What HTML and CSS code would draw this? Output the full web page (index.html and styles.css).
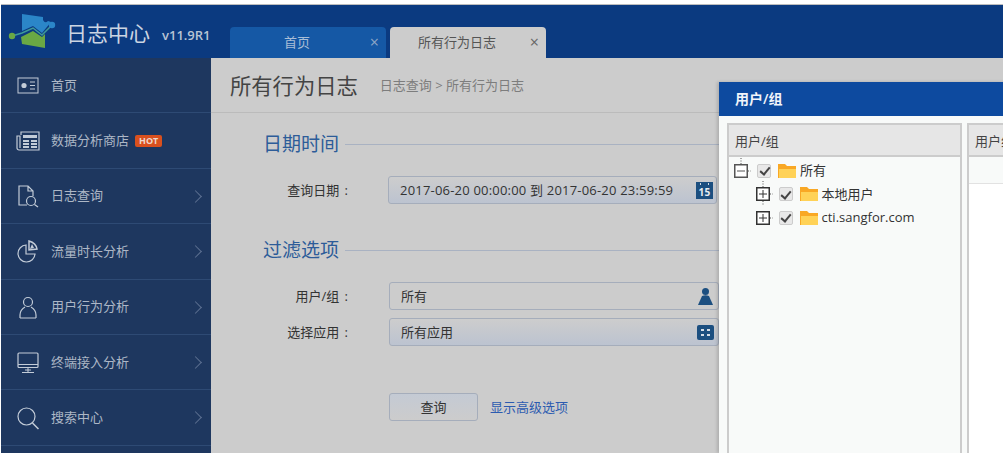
FILE: index.html
```html
<!DOCTYPE html>
<html lang="zh-CN">
<head>
    <meta charset="UTF-8">
    <meta name="viewport" content="width=device-width, initial-scale=1.0">
    <title>日志中心</title>
    <link rel="stylesheet" href="styles.css">
</head>
<body>
<div class="app">
    <header class="topbar">
        <div class="brand">
            <svg class="logo" width="48" height="38" viewBox="0 0 48 38">
                <path d="M14 1 L35 4 L35 7 Q37 11 40 8 L43 9 L34 20 L25 13 L14 18 Z" fill="#2b86c8"/>
                <path d="M13 24 L25 18 L34 24 L37 21 L37 35 L14 31 Z" fill="#6aa844"/>
                <path d="M4 23 L14 20 L25 15 L34 22 L44 12" fill="none" stroke="#3f9a98" stroke-width="1.500"/>
                <circle cx="4" cy="23" r="3.200" fill="#6aa844"/>
                <circle cx="44" cy="12" r="3.200" fill="#2b86c8"/>
            </svg>
            <span class="brand-name">日志中心</span>
            <span class="brand-ver">v11.9R1</span>
        </div>
        <div class="tabs">
            <div class="tab"><span>首页</span><span class="tab-close">×</span></div>
            <div class="tab tab-active"><span>所有行为日志</span><span class="tab-close">×</span></div>
        </div>
    </header>

    <div class="layout">
        <nav class="sidebar">
            <a class="nav-item">
                <svg class="nav-icon" viewBox="0 0 24 24"><rect x="2" y="5" width="20" height="15" fill="none" stroke="#c3ccd8"/><circle cx="8" cy="12.5" r="2.6" fill="#c3ccd8"/><path d="M14 9h5M14 12.500h5M14 16h5" stroke="#c3ccd8"/></svg>
                <span>首页</span>
            </a>
            <a class="nav-item">
                <svg class="nav-icon" viewBox="0 0 24 24"><path d="M5 6V3h18v18H3a2 2 0 0 1-2-2V7h3v12" fill="none" stroke="#c3ccd8" stroke-width="1.200"/><path d="M7 6h14v3H7zM7 11h6v2H7zM7 14h6v2H7zM7 17h6v2H7zM15 11h6v2h-6zM15 14h6v2h-6zM15 17h6v2h-6z" fill="#c3ccd8"/></svg>
                <span>数据分析商店</span><em class="hot">HOT</em>
            </a>
            <a class="nav-item">
                <svg class="nav-icon" viewBox="0 0 24 24"><path d="M11 21H3V2h9l5 5v5M12 2v5h5" fill="none" stroke="#c3ccd8" stroke-width="1.200"/><circle cx="15" cy="17" r="4.500" fill="none" stroke="#c3ccd8" stroke-width="1.200"/><path d="M18.500 20.500 22 23" stroke="#c3ccd8" stroke-width="1.200"/></svg>
                <span>日志查询</span><i class="chev"></i>
            </a>
            <a class="nav-item">
                <svg class="nav-icon" viewBox="0 0 24 24"><path d="M10 6a8.500 8.500 0 1 0 9 9h-9z" fill="none" stroke="#c3ccd8" stroke-width="1.200"/><path d="M13 2v9l8-1q-1-6-8-8z" fill="none" stroke="#c3ccd8" stroke-width="1.500"/><path d="M16 5l2 4-4 1z" fill="#c3ccd8"/></svg>
                <span>流量时长分析</span><i class="chev"></i>
            </a>
            <a class="nav-item">
                <svg class="nav-icon" viewBox="0 0 24 24"><circle cx="12" cy="7" r="4.500" fill="none" stroke="#c3ccd8" stroke-width="1.200"/><path d="M4 23v-3q0-5 5-8M20 23v-3q0-5-5-8M4 23h16" fill="none" stroke="#c3ccd8" stroke-width="1.200"/></svg>
                <span>用户行为分析</span><i class="chev"></i>
            </a>
            <a class="nav-item">
                <svg class="nav-icon" viewBox="0 0 24 24"><rect x="2" y="3" width="20" height="14.500" rx="1" fill="none" stroke="#c3ccd8" stroke-width="1.200"/><path d="M2 14.500h20M12 18v4M6 22.500h12M9 20h6" stroke="#c3ccd8" fill="none"/></svg>
                <span>终端接入分析</span><i class="chev"></i>
            </a>
            <a class="nav-item">
                <svg class="nav-icon" viewBox="0 0 24 24"><circle cx="10.500" cy="10.500" r="8.500" fill="none" stroke="#c3ccd8" stroke-width="1.200"/><path d="M16.500 17l6 6" stroke="#c3ccd8" stroke-width="1.500"/></svg>
                <span>搜索中心</span><i class="chev"></i>
            </a>
        </nav>

        <main class="main">
            <div class="page-head">
                <h1>所有行为日志</h1>
                <span class="crumbs">日志查询 &gt; 所有行为日志</span>
            </div>

            <section class="section section-date">
                <h2><span>日期时间</span></h2>
                <div class="field">
                    <label>查询日期 :</label>
                    <div class="input input-date">
                        <span>2017-06-20 00:00:00 到 2017-06-20 23:59:59</span>
                        <svg width="17" height="17" viewBox="0 0 17 17"><rect width="17" height="17" fill="#1c4f80"/><path d="M4.500 1v2M12.500 1v2" stroke="#cfd8e2"/><text x="8.500" y="14" class="cal-num">15</text></svg>
                    </div>
                </div>
            </section>

            <section class="section section-filter">
                <h2><span>过滤选项</span></h2>
                <div class="field">
                    <label>用户/组 :</label>
                    <div class="input input-plain">
                        <span>所有</span>
                        <svg width="15" height="17" viewBox="0 0 15 17"><circle cx="7.500" cy="3.500" r="3.500" fill="#1c4f80"/><path d="M4 8q3.500-1.500 7 0l4 9H0z" fill="#1c4f80"/></svg>
                    </div>
                </div>
                <div class="field">
                    <label>选择应用 :</label>
                    <div class="input">
                        <span>所有应用</span>
                        <svg width="17" height="15" viewBox="0 0 17 15"><rect width="17" height="15" rx="2" fill="#1c4f80"/><path d="M4 4h3v2H4zM10 4h3v2h-3zM4 9h3v2H4zM10 9h3v2h-3z" fill="#d5dde6"/></svg>
                    </div>
                </div>
                <div class="actions">
                    <button class="btn">查询</button>
                    <a class="link">显示高级选项</a>
                </div>
            </section>
        </main>
    </div>

    <div class="dialog">
        <div class="dialog-title">用户/组</div>
        <div class="dialog-body">
            <div class="panel panel-tree">
                <div class="panel-head">用户/组</div>
                <ul class="tree">
                    <li class="tree-row">
                        <svg class="exp" width="14" height="14" viewBox="0 0 14 14"><path d="M7-6V0M14 7h3" stroke="#555" stroke-dasharray="1 1.500"/><rect x=".75" y=".75" width="12.500" height="12.500" fill="#fff" stroke="#555" stroke-width="1.500"/><path d="M3 7h8" stroke="#555"/></svg>
                        <span class="check"></span>
                        <svg class="folder" width="18" height="14" viewBox="0 0 18 14"><path d="M0 0h7l2 2h9v12H0z" fill="#f9a825"/><path d="M1 5h17v9H1z" fill="#ffd257"/></svg>
                        <span class="tree-label">所有</span>
                    </li>
                    <li class="tree-row tree-child">
                        <svg class="exp" width="14" height="14" viewBox="0 0 14 14"><path d="M7-6V0M7 14v5M14 7h3" stroke="#555" stroke-dasharray="1 1.500"/><rect x=".75" y=".75" width="12.500" height="12.500" fill="#fff" stroke="#333" stroke-width="1.500"/><path d="M3 7h8M7 3v8" stroke="#333"/></svg>
                        <span class="check"></span>
                        <svg class="folder" width="18" height="14" viewBox="0 0 18 14"><path d="M0 0h7l2 2h9v12H0z" fill="#f9a825"/><path d="M1 5h17v9H1z" fill="#ffd257"/></svg>
                        <span class="tree-label">本地用户</span>
                    </li>
                    <li class="tree-row tree-child">
                        <svg class="exp" width="14" height="14" viewBox="0 0 14 14"><path d="M14 7h3" stroke="#555" stroke-dasharray="1 1.500"/><rect x=".75" y=".75" width="12.500" height="12.500" fill="#fff" stroke="#333" stroke-width="1.500"/><path d="M3 7h8M7 3v8" stroke="#333"/></svg>
                        <span class="check"></span>
                        <svg class="folder" width="18" height="14" viewBox="0 0 18 14"><path d="M0 0h7l2 2h9v12H0z" fill="#f9a825"/><path d="M1 5h17v9H1z" fill="#ffd257"/></svg>
                        <span class="tree-label">cti.sangfor.com</span>
                    </li>
                </ul>
            </div>
            <div class="panel panel-users">
                <div class="panel-head">用户组</div>
                <div class="panel-subhead"></div>
            </div>
        </div>
    </div>
</div>
</body>
</html>
```

FILE: styles.css
```css
* {
    box-sizing: border-box;
}
html, body {
    margin: 0;
    height: 459px;
    overflow: hidden;
    background: #fff;
}
body {
    font-family: "Open Sans", "Noto Sans CJK SC", sans-serif;
    font-size: 13px;
    color: #333;
}
.app {
    position: relative;
    height: 449px;
    margin-left: 1px;
    border-top: 1px solid #bdbdbd;
    margin-top: 4px;
    display: flex;
    flex-direction: column;
    overflow: hidden;
}

/* top bar */
.topbar {
    height: 53px;
    flex: none;
    display: flex;
    align-items: flex-end;
    background: #0b3a80;
}
.brand {
    width: 229px;
    height: 53px;
    display: flex;
    align-items: center;
    padding-left: 7px;
}
.logo {
    flex: none;
    margin-top: 1px;
}
.brand-name {
    margin-left: 10px;
    font-size: 21px;
    color: #ccd5e2;
    white-space: nowrap;
}
.brand-ver {
    margin: 6px 0 0 12px;
    font-size: 13px;
    font-weight: 600;
    color: #b9c4d4;
}
.tabs {
    display: flex;
    gap: 4px;
}
.tab {
    width: 156px;
    height: 31px;
    display: flex;
    align-items: center;
    justify-content: center;
    position: relative;
    padding: 0 22px 3px 0;
    border-radius: 4px 4px 0 0;
    background: #1558a5;
    color: #a9bdd6;
}
.tab-active {
    background: #ccc;
    color: #555;
}
.tab-close {
    position: absolute;
    right: 7px;
    top: 7px;
    font-size: 16px;
    line-height: 16px;
    color: #8ea6c6;
}
.tab-active .tab-close {
    color: #666;
}

.layout {
    flex: 1;
    display: flex;
    min-height: 0;
}

/* left nav */
.sidebar {
    width: 210px;
    flex: none;
    background: #1e375f;
}
.nav-item {
    height: 55.400px;
    display: flex;
    align-items: center;
    padding-left: 15px;
    border-bottom: 1px solid #2e4a74;
    color: #adb7c6;
    position: relative;
}
.nav-item span {
    margin-bottom: 2px;
}
.nav-icon {
    width: 24px;
    height: 24px;
    flex: none;
    margin-right: 11px;
}
.hot {
    margin-left: 6px;
    padding: 0 4px;
    height: 12px;
    line-height: 12px;
    border-radius: 2px;
    font-size: 9px;
    font-style: normal;
    font-weight: bold;
    background: #d9501e;
    color: #eed7cc;
}
.chev {
    width: 9px;
    height: 9px;
    position: absolute;
    right: 11px;
    top: 23px;
    border-top: 1px solid #5d7091;
    border-right: 1px solid #5d7091;
    transform: rotate(45deg);
}

/* main */
.main {
    flex: 1;
    min-width: 0;
    background: #ccc;
}
.page-head {
    height: 55px;
    display: flex;
    align-items: center;
    padding: 0 0 2px 19px;
    border-bottom: 1px solid #bbb;
}
.page-head h1 {
    margin: 0 22px 0 0;
    font-size: 21.300px;
    font-weight: normal;
    color: #444;
}
.crumbs {
    color: #7d7d7d;
}
.section h2 {
    margin: 0;
    padding-left: 52px;
    display: flex;
    align-items: center;
    font-size: 19px;
    line-height: 26px;
    font-weight: normal;
    color: #2d5c99;
}
.section h2::after {
    content: "";
    flex: 1;
    height: 1px;
    margin-left: 6px;
    background: #a9b2c2;
}
.section-date {
    padding-top: 18px;
}
.section-filter {
    padding-top: 33px;
}
.field {
    display: flex;
    align-items: center;
    margin-top: 8px;
}
.section h2 + .field {
    margin-top: 19px;
}
.field label {
    width: 178px;
    flex: none;
    text-align: right;
    color: #333;
    padding: 0 41px 2px 0;
    word-spacing: 2px;
}
.input {
    width: 330px;
    height: 28px;
    display: flex;
    align-items: center;
    justify-content: space-between;
    padding: 0 4px 0 11px;
    border: 1px solid #a5adbb;
    border-radius: 3px;
    background: linear-gradient(#cdcdcd, #bcc3d0);
    color: #333;
}
.input span {
    margin-bottom: 2px;
}
.input-plain {
    background: #ccc;
    padding-right: 5px;
}
.input-date {
    margin-left: -1px;
    width: 329px;
    padding-right: 3px;
    letter-spacing: 0.2px;
}
.actions {
    display: flex;
    align-items: center;
    gap: 12px;
    margin: 47px 0 0 178px;
}
.btn {
    width: 89px;
    height: 28px;
    padding: 0 0 2px;
    border: 1px solid #a5adbb;
    border-radius: 3px;
    background: linear-gradient(#c4cad4, #ccc);
    font: inherit;
    color: #333;
}
.link {
    margin-bottom: 2px;
    color: #2c5bb0;
}

/* user/group dialog */
.dialog {
    position: absolute;
    left: 718px;
    top: 77px;
    width: 300px;
    height: 371px;
    background: #f8faf9;
    box-shadow: -2px 0 3px rgba(0, 0, 0, 0.15);
}
.dialog-title {
    height: 34px;
    line-height: 33px;
    padding-left: 16px;
    background: #0d4a9f;
    color: #f2f5fa;
    font-size: 14px;
    font-weight: 600;
}
.dialog-body {
    display: flex;
    gap: 5px;
    padding: 7px 0 0 8px;
    height: 337px;
}
.panel {
    flex: none;
    height: 100%;
    border: 2px solid #ccc;
    border-bottom: 0;
}
.panel-tree {
    width: 235px;
}
.panel-users {
    width: 100px;
    background: #fff;
}
.panel-head {
    height: 32px;
    line-height: 32px;
    padding-left: 6px;
    background: #e6e6e6;
    border-bottom: 2px solid #ccc;
    color: #444;
}
.panel-subhead {
    height: 27px;
    background: #f8faf9;
    border-bottom: 1px solid #e2e2e2;
}
.tree {
    list-style: none;
    margin: 0;
    padding: 2px 0 0 5px;
}
.tree-row {
    height: 23.500px;
    display: flex;
    align-items: center;
    color: #333;
}
.tree-child {
    padding-left: 21.500px;
}
.tree-label {
    margin-bottom: 2px;
}
.exp {
    flex: none;
    overflow: visible;
    margin-right: 9px;
}
.check {
    width: 14px;
    height: 14px;
    flex: none;
    margin-right: 7px;
    position: relative;
    border-radius: 2px;
    border: 1px solid #ccc;
    background: #e8e8e8;
}
.check::after {
    content: "";
    position: absolute;
    left: 3.500px;
    top: 0.500px;
    width: 4px;
    height: 8px;
    border-right: 2px solid #444;
    border-bottom: 2px solid #444;
    transform: rotate(40deg);
}
.folder {
    flex: none;
    margin-right: 4px;
}
.cal-num {
    font-size: 10px;
    font-weight: bold;
    fill: #e8edf2;
    text-anchor: middle;
}
```
